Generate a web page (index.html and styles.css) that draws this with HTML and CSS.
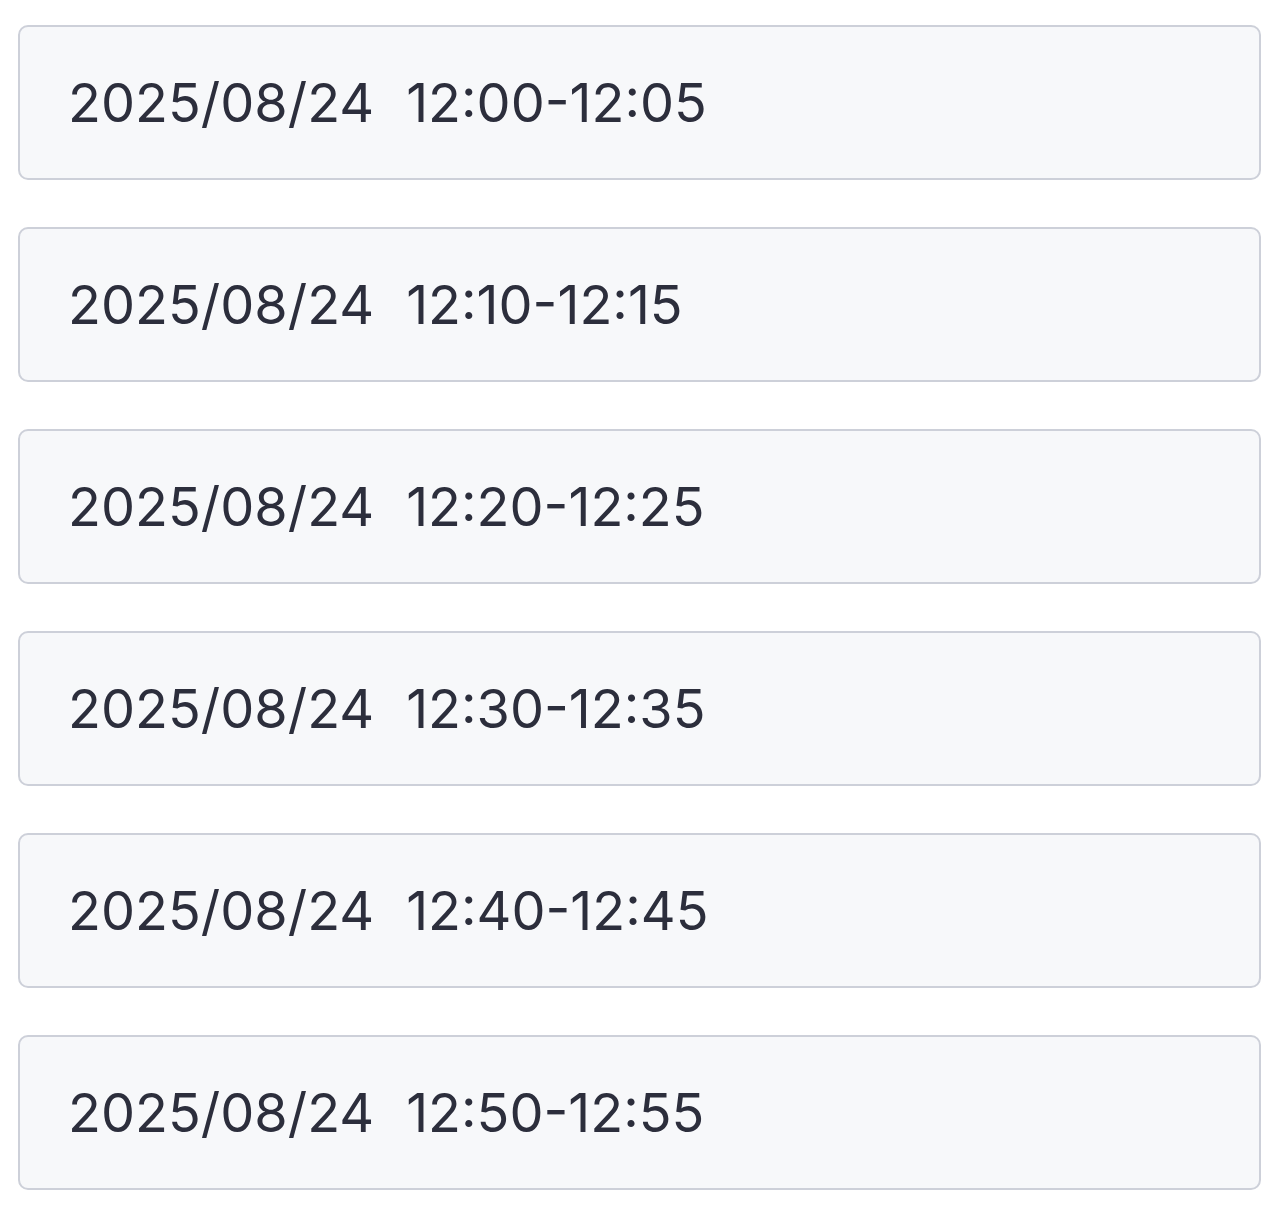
FILE: index.html
```html
<!DOCTYPE html>
<html lang="ja">
<head>
<meta charset="utf-8">
<link rel="stylesheet" href="styles.css">
</head>
<body>
<ul class="slots">
  <li class="slot"><span class="date">2025/08/24</span><span class="time">12:00-12:05</span></li>
  <li class="slot"><span class="date">2025/08/24</span><span class="time">12:10-12:15</span></li>
  <li class="slot"><span class="date">2025/08/24</span><span class="time">12:20-12:25</span></li>
  <li class="slot"><span class="date">2025/08/24</span><span class="time">12:30-12:35</span></li>
  <li class="slot"><span class="date">2025/08/24</span><span class="time">12:40-12:45</span></li>
  <li class="slot"><span class="date">2025/08/24</span><span class="time">12:50-12:55</span></li>
</ul>
</body>
</html>
```
FILE: styles.css
```css
html, body {
  margin: 0;
  padding: 0;
  background: #ffffff;
}
body {
  font-family: Inter, "Noto Sans", sans-serif;
  color: #2c2e3c;
}
.slots {
  list-style: none;
  margin: 0;
  padding: 25px 19px 0 18px;
  display: flex;
  flex-direction: column;
  gap: 47px;
}
.slot {
  box-sizing: border-box;
  height: 155px;
  display: flex;
  align-items: center;
  padding-left: 48px;
  background: #f7f8fa;
  border: 2px solid #cdd0d9;
  border-radius: 10px;
  font-size: 54px;
}
.date {
  margin-right: 32px;
}
```
